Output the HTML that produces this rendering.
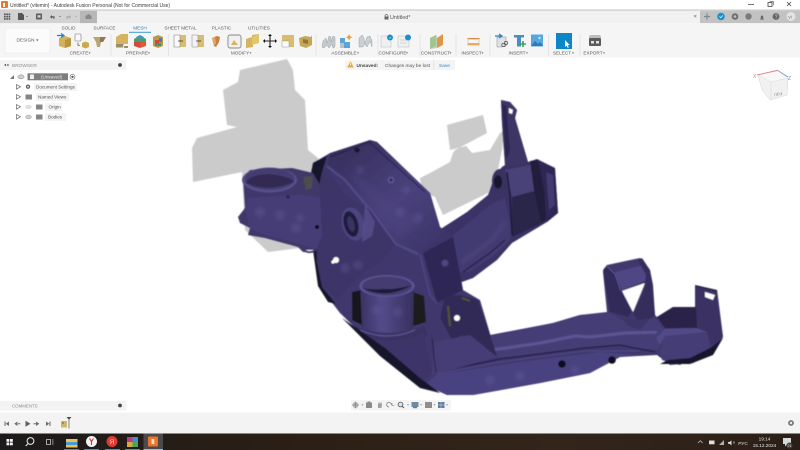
<!DOCTYPE html>
<html><head><meta charset="utf-8"><style>
html,body{margin:0;padding:0;background:#fff;width:800px;height:450px;overflow:hidden}
svg{display:block}
text{font-family:"Liberation Sans","DejaVu Sans",sans-serif}
</style></head><body>
<svg width="800" height="450" viewBox="0 0 800 450" xmlns="http://www.w3.org/2000/svg">
<defs>
<filter id="b1" x="-5%" y="-5%" width="110%" height="110%"><feGaussianBlur stdDeviation="0.6"/></filter>
<filter id="b2" x="-30%" y="-30%" width="160%" height="160%"><feGaussianBlur stdDeviation="1.5"/></filter>
<filter id="b4" x="-30%" y="-30%" width="160%" height="160%"><feGaussianBlur stdDeviation="3"/></filter>
<filter id="b3" x="-5%" y="-5%" width="110%" height="110%"><feGaussianBlur stdDeviation="0.6"/></filter>
<filter id="bt" x="-5%" y="-20%" width="110%" height="140%"><feGaussianBlur stdDeviation="0.35"/></filter>
<linearGradient id="tb" x1="0" x2="1" y1="0" y2="0"><stop offset="0" stop-color="#1c1a1b"/><stop offset=".35" stop-color="#2b1f15"/><stop offset=".7" stop-color="#33251a"/><stop offset="1" stop-color="#2a1f18"/></linearGradient>
<linearGradient id="top" x1="0" x2="1" y1="0" y2="1"><stop offset="0" stop-color="#332c58"/><stop offset=".55" stop-color="#4a427c"/><stop offset="1" stop-color="#3a3265"/></linearGradient>
<linearGradient id="tube" x1="0" x2="1" y1="0" y2="0"><stop offset="0" stop-color="#3a3263"/><stop offset=".4" stop-color="#534b8a"/><stop offset="1" stop-color="#37305e"/></linearGradient>
</defs>
<rect width="800" height="450" fill="#fff"/>

<!-- Shadow -->
<g fill="#cbcbcb" filter="url(#b1)">
<path d="M240 70 L287 59 L293 70 L295 90 L305 100 L308 150 L318 158 L322 175 L300 215 L270 232 L312 244 L300 248 L268 252 L245 230 L242 172 L193 182 L192 148 L197 138 L237 127 L227 125 L223 90 L238 82Z"/>
<path d="M447 125 L483 115 L487 133 L455 150 L453 153 L450 162 L430 173 L420 178 L422 192 L435 197 L443 215 L488 193 L498 170 L502 150 L505 130 L500 133 L490 150 L472 153 L466 146 L450 150Z"/>
</g>

<g filter="url(#b3)">
<!-- Rear right arm -->
<path d="M436 232 L467 212 L488 195 L495 175 L502 167 L505 165 L502 123 L501 100 L510 102 L517 110 L515 118 L528 162 L537 159 L555 168 L558 213 L547 222 L512 243 L497 260 L473 278 L462 282 L450 280Z" fill="#3b3366"/>
<path d="M447 240 L490 205 L505 198 L512 232 L510 240 L495 255 L470 272 L458 272Z" fill="#433b71"/>
<path d="M463 272 L490 253 L505 240" stroke="#2a2449" stroke-width="1.400" fill="none"/>
<path d="M462 262 L492 240 L505 222" stroke="#524a86" stroke-width="3" fill="none" opacity=".6" filter="url(#b2)"/>
<path d="M501 100 L510 102 L517 110 L515 118 L528 162 L515 166 L505 165 L502 123Z" fill="#3c3466"/>
<path d="M502 104 L506 106 L510 150 L506 160Z" fill="#2b2550"/>
<path d="M509 108 L513 110 L512 114 L509 113Z" fill="#fff"/>
<!-- under roller support -->
<path d="M512 187 L537 183 L545 222 L512 237Z" fill="#2b2549"/>
<!-- right end cap -->
<path d="M537 160 L555 168 L558 213 L547 222 L542 205 Z" fill="#2f2852"/>
<path d="M546 172 L553 175 L555 205 L549 210Z" fill="#433b70"/>
<!-- roller -->
<path d="M505 170 L530 165 L540 170 L538 190 L512 197Z" fill="#4a4279"/>
<ellipse cx="500" cy="181" rx="8" ry="12" fill="#38305f"/>
<ellipse cx="498" cy="182" rx="4" ry="6.500" fill="#16122e"/>
<path d="M530 161 L538 160 L544 190 L546 220 L541 222 L534 190Z" fill="#221d3e"/>
<path d="M507 172 L510 195 L512 235" stroke="#1c1834" stroke-width="1.400" fill="none"/>

<!-- Lower arm -->
<path d="M470 345 L490 335 L553 323 L580 315 L607 312 L603 272 L607 265 L640 258 L650 270 L655 315 L657 317 L673 307 L695 307 L695 285 L717 290 L723 337 L713 353 L693 363 L670 365 L657 355 L620 357 L590 373 L540 383 L473 395 L447 395 L420 383 L380 350 L400 330Z" fill="#40386d"/>
<path d="M490 336 L553 323 L580 315 L610 313 L632 326 L655 318 L665 330 L658 350 L620 346 L585 348 L530 355 L495 358Z" fill="#443c75"/>
<path d="M492 350 L540 343 L575 336 L590 337 L625 333 L657 332" stroke="#6d66a6" stroke-width="3" fill="none" opacity=".65" filter="url(#b1)"/>
<path d="M436 372 L500 359 L585 348 L620 345 L655 352" stroke="#241e44" stroke-width="1.200" fill="none"/>
<path d="M432 375 L500 362 L585 351 L640 351" stroke="#6059a0" stroke-width=".7" fill="none" opacity=".7"/>
<path d="M424 386 L450 395 L473 395 L540 383 L590 373 L620 357 L640 355 L600 352 L520 362 L436 375Z" fill="#4a4280"/>
<circle cx="562" cy="364" r="3.800" fill="#0c0a1c"/><circle cx="612" cy="360" r="3.800" fill="#0c0a1c"/>

<!-- Bracket w/ roller right -->
<path d="M622 291 L645 283 L633 312Z" fill="#fff"/>
<path d="M603 270 L607 265 L615 272 L622 291 L632 312 L628 317 L610 312 L605 283Z" fill="#332c59"/>
<path d="M615 272 L645 265 L647 280 L622 290Z" fill="#4f4784"/>
<path d="M607 266 L615 274 L621 291" stroke="#5f5898" stroke-width="1" fill="none"/>
<path d="M638 260 L642 258 L650 270 L653 285 L655 315 L640 325 L633 313 L643 293 L646 275Z" fill="#352e5c"/>
<path d="M622 318 L640 320 L650 318 L640 330 L628 326Z" fill="#3e3669"/>
<!-- right tube -->
<path d="M657 317 L673 307 L697 307 L697 328 L665 328Z" fill="#29234a"/>
<path d="M660 350 L665 335 L707 332 L710 348 L680 365 L662 360Z" fill="#443c75"/>
<path d="M665 329 L697 328 L707 332 L665 336 L660 345 L656 338Z" fill="#524a88"/>
<path d="M695 285 L717 290 L723 337 L712 347 L707 332 L697 328Z" fill="#3a3263"/>
<path d="M705 292 L715 295 L713 300 L705 297Z" fill="#fff"/>
<path d="M696 286 L717 291" stroke="#231e3e" stroke-width="1" fill="none"/>
<path d="M660 364 L690 364 L713 355 L723 338 L712 347 L690 358 L668 360Z" fill="#16122a"/>

<!-- Main body -->
<path d="M313 163 L330 153 L370 140 L377 142 L430 193 L440 227 L453 237 L463 290 L480 300 L497 357 L470 362 L440 372 L420 385 L380 352 L340 313 L320 287 L317 263 L313 240Z" fill="#40386d"/>
<path d="M327 165 L331 153 L370 140 L377 142 L430 193 L440 227 L453 237 L425 252 L397 243 L370 210 L345 180Z" fill="url(#top)"/>
<path d="M345 168 L390 200 L420 222 L400 238 L375 205Z" fill="#4d4581" opacity=".5" filter="url(#b4)"/>
<path d="M330 157 L369 142 L425 192" stroke="#26204a" stroke-width="1" fill="none"/>
<path d="M327 166 L345 180 L372 212 L396 244 L418 254" stroke="#5f5898" stroke-width="2" fill="none" opacity=".7" filter="url(#b1)"/>
<path d="M370 215 L386 246 L378 262 L362 246Z" fill="#5a5290" opacity=".5" filter="url(#b1)"/>
<path d="M316 170 L327 168 L345 195 L370 210 L395 245 L380 262 L365 272 L350 285 L338 300 L322 285 L318 263Z" fill="#3c3468"/>
<path d="M423 253 L453 237 L463 290 L437 303Z" fill="#2d2754"/>
<circle cx="445" cy="263" r="3.500" fill="#4f4785" filter="url(#b1)"/>
<path d="M420 254 L430 295 L437 303" stroke="#4b4380" stroke-width="2" fill="none"/>
<!-- main body black left edge -->
<path d="M313 163 L327 156 L322 172 L318 190 L316 215 L317 262 L322 287 L336 304 L328 302 L318 286 L313 250 L312 210 L310 178Z" fill="#16132b"/>
<!-- bushing -->
<ellipse cx="353" cy="224" rx="11" ry="17" fill="#4d4580" transform="rotate(-15 353 224)"/>
<ellipse cx="351" cy="224" rx="7" ry="13" fill="#1f1a3a" transform="rotate(-15 351 224)"/>
<ellipse cx="351" cy="224" rx="3.500" ry="8" fill="#3a3263" transform="rotate(-15 351 224)"/>
<path d="M365 205 L375 222 L372 236 L362 242Z" fill="#63599a" opacity=".6"/>
<circle cx="357" cy="150" r="2.600" fill="#1b1735"/>
<circle cx="391" cy="180" r="3.500" fill="#5b5394"/>
<circle cx="391" cy="180" r="1.600" fill="#332c58"/>
<circle cx="336" cy="260" r="3" fill="#fff"/>
<circle cx="333" cy="262" r="1.600" fill="#fff"/>

<!-- Left arm -->
<path d="M243 177 L245 208 L238 217 L240 223 L250 228 L248 235 L265 238 L298 247 L303 252 L316 250 L322 235 L320 185 L313 173 L292 168 L250 170Z" fill="#3f3769"/>
<path d="M247 198 L300 195 L320 198 L322 236 L316 250 L304 245 L262 234 L250 228 L246 212Z" fill="#463e76"/>
<path d="M303 250 Q310 254 316 250" stroke="#3a3263" stroke-width="2" fill="#fff"/>
<circle cx="317" cy="227" r="2" fill="#0b0918"/>
<ellipse cx="269.500" cy="180" rx="27.500" ry="12.500" fill="#57508b"/>
<ellipse cx="269.500" cy="179" rx="25" ry="11" fill="#453d72"/>
<path d="M246 183 Q269 193 294 182 Q290 176 269 174 Q248 175 246 183Z" fill="#302952"/>
<path d="M303 177 L313 176 L312 188 L306 190Z" fill="#4e4e4e"/>
<circle cx="288" cy="197" r="1.800" fill="#2c2650"/>

<!-- Center tube -->
<path d="M352 292 L362 290 L362 325 L352 320Z" fill="#14121c"/>
<path d="M413 292 L424 296 L426 322 L413 326Z" fill="#1a1c1a"/>
<path d="M360 285 L414 285 L413 328 Q388 340 362 328Z" fill="url(#tube)"/>
<ellipse cx="387" cy="286" rx="27.500" ry="11" fill="#5b5495"/>
<ellipse cx="387" cy="286" rx="25" ry="9.500" fill="#443c72"/>
<path d="M362 288 Q387 300 412 285 Q395 290 385 289 Q370 290 362 288Z" fill="#1f1a38"/>
<path d="M355 326 Q388 340 424 326 L428 335 Q390 348 365 338Z" fill="#3a3263"/>
<path d="M364 338 Q395 345 424 333 L432 372 L420 384 L390 360Z" fill="#3e3669"/>
<path d="M360 330 Q388 342 415 330" stroke="#5f5898" stroke-width="1.200" fill="none"/>
<!-- Right bracket near tube -->
<path d="M445 296 L460 295 L478 300 L497 356 L470 352 L462 335 L452 340 L440 318Z" fill="#322b57"/>
<circle cx="457" cy="318" r="3" fill="#fff"/>
<path d="M448 306 L450 326" stroke="#55552f" stroke-width="2" fill="none"/>
<path d="M462 298 L470 301" stroke="#55552f" stroke-width="2" fill="none"/>
<path d="M435 342 L470 335 L497 357 L440 373 L432 374Z" fill="#463e76"/>
<path d="M432 338 L436 373" stroke="#26204a" stroke-width="1" fill="none"/>
<!-- lower-left dark edge -->
<path d="M342 318 L380 356 L420 388 L440 393 L420 378 L385 348Z" fill="#16132b"/>
</g>
<!-- surface blotches -->
<g fill="#6a64a6" opacity=".28" filter="url(#b2)">
<circle cx="260" cy="212" r="5"/><circle cx="280" cy="215" r="5"/><circle cx="300" cy="218" r="4"/><circle cx="296" cy="228" r="5"/>
<circle cx="345" cy="268" r="5"/><circle cx="358" cy="265" r="5"/><circle cx="400" cy="212" r="5"/><circle cx="418" cy="218" r="5"/>
<circle cx="376" cy="310" r="5"/><circle cx="398" cy="312" r="5"/><circle cx="520" cy="376" r="5"/><circle cx="490" cy="380" r="5"/><circle cx="575" cy="370" r="4"/>
<circle cx="360" cy="170" r="4"/><circle cx="406" cy="190" r="4"/>
</g>

<!-- Title bar -->
<rect x="0" y="0" width="800" height="10" fill="#fff"/>
<rect x="1" y="1" width="7" height="7" rx="1" fill="#e8792a"/>
<rect x="3" y="3" width="2" height="4" fill="#fff"/>
<text x="10" y="7.200" font-size="5" fill="#3c3c3c" filter="url(#bt)">Untitled* (vitemin) - Autodesk Fusion Personal (Not for Commercial Use)</text>
<path d="M748 4.500h6" stroke="#555" stroke-width=".8"/>
<rect x="768" y="2.500" width="4" height="4" fill="none" stroke="#444" stroke-width=".8"/><path d="M770 2v-.3h3.500v3.500" fill="none" stroke="#444" stroke-width=".6"/>
<path d="M787 2l4 4M791 2l-4 4" stroke="#444" stroke-width=".8"/>
<rect y="9.500" width="800" height="1.200" fill="#c4c4c4"/>

<!-- Tab row -->
<rect y="10.700" width="800" height="12.500" fill="#f1f1f1"/>
<rect y="10.700" width="97" height="12.500" fill="#d2d2d2"/>
<rect x="80" y="11" width="17" height="12.200" fill="#b7b7b7"/>
<path d="M85.500 19v-3l3-2 3 2v3z" fill="#888"/>
<g fill="#4d4d4d"><rect x="4" y="13.500" width="1.600" height="1.600"/><rect x="6.300" y="13.500" width="1.600" height="1.600"/><rect x="8.600" y="13.500" width="1.600" height="1.600"/><rect x="4" y="15.800" width="1.600" height="1.600"/><rect x="6.300" y="15.800" width="1.600" height="1.600"/><rect x="8.600" y="15.800" width="1.600" height="1.600"/><rect x="4" y="18.100" width="1.600" height="1.600"/><rect x="6.300" y="18.100" width="1.600" height="1.600"/><rect x="8.600" y="18.100" width="1.600" height="1.600"/></g>
<path d="M18 13h4l2 2v5h-6z" fill="#555"/><path d="M26 16l1 1 1-1z" fill="#555"/>
<rect x="36" y="13.500" width="6" height="6" rx=".6" fill="#5d5d5d"/><rect x="37.500" y="15.200" width="3" height="2.400" fill="#d2d2d2"/>
<path d="M50 17l2-2v1.300h2.500v2.500h-1.200v-1.300h-1.300v1.300z" fill="#555"/><path d="M59 16l1 1 1-1z" fill="#555"/>
<path d="M71 17l-2-2v1.300h-2.500v2.500h1.200v-1.300h1.300v1.300z" fill="#a8a8a8"/><path d="M75 16l1 1 1-1z" fill="#a0a0a0"/>
<!-- doc tab -->
<path d="M385 19v-3a1.500 1.500 0 0 1 3 0v3" fill="none" stroke="#666" stroke-width=".7"/><rect x="384.500" y="16.500" width="4" height="3" fill="#666"/>
<text x="390" y="19" font-size="5.400" fill="#555" filter="url(#bt)">Untitled*</text>
<path d="M694 15l2.400 2.400M696.400 15l-2.400 2.400" stroke="#888" stroke-width=".6"/>
<!-- right quick icons -->
<rect x="700" y="10.700" width="100" height="12.500" fill="#c2c2c2"/>
<path d="M707 13.500v6M704 16.500h6" stroke="#7e8a8e" stroke-width="1.300"/>
<circle cx="721" cy="16.500" r="3.800" fill="#1d8fcf"/><path d="M719.500 16.500l1.200 1.200 2-2.200" stroke="#fff" stroke-width=".7" fill="none"/>
<circle cx="735" cy="16.500" r="3.300" fill="#6f6f6f"/><circle cx="735" cy="16.500" r="1.300" fill="#c2c2c2"/>
<circle cx="748.500" cy="16.500" r="3.200" fill="#7a7a7a"/>
<path d="M760 19.500h4l-.8-1.200v-2a1.300 1.300 0 0 0-2.400 0v2z" fill="#666"/>
<circle cx="776" cy="16.500" r="3.400" fill="#666"/><text x="774.800" y="18.500" font-size="5" fill="#ddd">?</text>
<circle cx="791" cy="16.500" r="4.500" fill="#e3e3e3"/><text x="788.200" y="18.500" font-size="4.800" fill="#777">vi</text>

<!-- Ribbon -->
<rect y="23.200" width="800" height="34.300" fill="#f5f5f5"/>
<rect x="5" y="28" width="45" height="25" rx="2" fill="#fbfbfb" stroke="#e6e6e6" stroke-width=".5"/>
<g font-size="4.700" fill="#5a5a5a" text-anchor="middle" filter="url(#bt)">
<text x="25.500" y="41.500">DESIGN</text>
<text x="68.500" y="29.300">SOLID</text>
<text x="104.500" y="29.300">SURFACE</text>
<text x="140" y="29.300" fill="#2a7fb5">MESH</text>
<text x="180.500" y="29.300">SHEET METAL</text>
<text x="221.500" y="29.300">PLASTIC</text>
<text x="259" y="29.300">UTILITIES</text>
<text x="79" y="54.500">CREATE</text>
<text x="137" y="54.500">PREPARE</text>
<text x="240" y="54.500">MODIFY</text>
<text x="344" y="54.500">ASSEMBLE</text>
<text x="392.500" y="54.500">CONFIGURE</text>
<text x="435.500" y="54.500">CONSTRUCT</text>
<text x="471.500" y="54.500">INSPECT</text>
<text x="517" y="54.500">INSERT</text>
<text x="562" y="54.500">SELECT</text>
<text x="593" y="54.500">EXPORT</text>
</g>
<g fill="#444"><path d="M36 39.500l1.300 1.500 1.300-1.500z"/><path d="M88.500 52.500l1 1.200 1-1.200z"/><path d="M148 52.500l1 1.200 1-1.200z"/><path d="M249.500 52.500l1 1.200 1-1.200z"/><path d="M357 52.500l1 1.200 1-1.200z"/><path d="M406 52.500l1 1.200 1-1.200z"/><path d="M449.500 52.500l1 1.200 1-1.200z"/><path d="M481.500 52.500l1 1.200 1-1.200z"/><path d="M526 52.500l1 1.200 1-1.200z"/><path d="M572 52.500l1 1.200 1-1.200z"/><path d="M603 52.500l1 1.200 1-1.200z"/></g>
<rect x="129" y="31.800" width="22" height="1" fill="#3d9bcc"/>
<g stroke="#dfdfdf" stroke-width=".7"><path d="M111 34v22M168.500 34v22M316 34v22M378 34v22M420 34v22M456 34v22M490 34v22M548.500 34v22M580 34v22"/></g>

<!-- ribbon icons -->
<g filter="url(#bt)">
<!-- create -->
<path d="M59 38l6-2 6 2v8l-6 2-6-2z" fill="#d4b25c"/><path d="M65 40v8l6-2v-8z" fill="#b8953f"/><path d="M57 35.500h7M61 33.500l3 2-3 2" stroke="#2b7fc0" stroke-width="1.200" fill="none"/>
<rect x="75" y="34" width="6" height="7" rx=".8" fill="#fafafa" stroke="#777" stroke-width=".6"/><path d="M78 42.500v3h2" stroke="#333" stroke-width=".6" fill="none"/><path d="M82 43l3.500-1.500 3.500 1.500v4l-3.500 1.500-3.500-1.500z" fill="#c8a951"/>
<path d="M93 37h13l-3 5h-2l-1 5h-3l-1-5z" fill="#b9a476"/><path d="M100 37h6l-3 5h-3z" fill="#8e7a4f"/>
<!-- prepare -->
<path d="M116 37l5-3h7v10h-4l-1 3h-7z" fill="#d6b45f"/><rect x="116" y="44" width="7" height="3.500" fill="#9c8d6b"/><rect x="124" y="46" width="4" height="2" fill="#9c8d6b"/>
<path d="M134 39l6-3.500 6 3.500v3h-12z" fill="#3fa26f"/><path d="M134 42h6v6l-6-2z" fill="#d2483c"/><path d="M140 42h6v4l-6 2z" fill="#e0593a"/><path d="M136 37l4-2 4 2-4 2z" fill="#4a90d0"/>
<path d="M153 37l5-2 5 2v9l-5 2-5-2z" fill="#b89a4a"/><rect x="155" y="40" width="4" height="3" fill="#d04a3a"/><rect x="159" y="38" width="3" height="4" fill="#3f7fc8"/><rect x="155" y="43" width="6" height="3" fill="#4a8f7a"/>
<!-- modify -->
<rect x="174" y="35" width="12" height="12" fill="#d8bd6e"/><rect x="174" y="35" width="6" height="12" fill="#fafafa" stroke="#777" stroke-width=".5"/><path d="M178 41h5" stroke="#222" stroke-width=".7"/>
<rect x="192" y="35" width="12" height="12" fill="#d8bd6e"/><rect x="192" y="35" width="6" height="12" fill="#f2f2f2" stroke="#888" stroke-width=".5"/><path d="M196 41h5" stroke="#222" stroke-width=".7"/>
<path d="M212 38l5-2 3 1-1 5-3 5-2-1z" fill="#c9803d"/><path d="M212 38l3-1 1 6-2 3z" fill="#e0a968"/>
<rect x="228" y="35" width="13" height="13" rx="2" fill="#f0f0f0" stroke="#666" stroke-width=".7"/><path d="M231 45l3-5 4 5z" fill="#d6b45f"/>
<path d="M246 39l6-2v-2l7-1v9l-6 1v3l-7 1z" fill="#d4b45c"/><path d="M252 37l7-3v9l-7 2z" fill="#e1c670"/>
<path d="M270 35v12M264 41h12" stroke="#222" stroke-width="1.100"/><path d="M270 34l-2 2h4zM270 48l-2-2h4zM263 41l2-2v4zM277 41l-2-2v4z" fill="#111"/>
<rect x="282" y="35" width="12" height="12" fill="#d8bd6e"/><rect x="282" y="41" width="7" height="6" fill="#fafafa" stroke="#888" stroke-width=".4"/>
<path d="M299 38l6-2 6 1 1-2 0 10-6 3-6-2z" fill="#c6a758"/><path d="M303 39l5 1v4l-5-1z" fill="#8f7739"/>
<!-- assemble -->
<path d="M322 47l1-6 3-3 1 5 2-7 2 1 0 5 2-6 2 1v9l-1 2h-1l-1-4-3 4-2-3-3 3z" fill="#c3c9cc" stroke="#8d979c" stroke-width=".4"/>
<path d="M340 38h5v4h5v6h-10z" fill="#5aa4d8"/><path d="M340 43h4v5h-4z" fill="#b8c2c8"/><path d="M349 34l1.200 2.300 2.300 1-2.300 1-1.200 2.300-1-2.300-2.300-1 2.300-1z" fill="#e8a13b"/>
<path d="M359 47v-9l3-3 2 3 1 6 2-7 3-1 2 5v6l-2-6-3 6-2-3-2 3z" fill="#c9cfd2" stroke="#8d979c" stroke-width=".4"/>
<!-- configure -->
<rect x="381" y="36" width="10" height="11" fill="#eef0f2" stroke="#aaa" stroke-width=".4"/><circle cx="390" cy="37.500" r="3" fill="#1d8fcf"/><path d="M388.800 37.500l1 1 1.500-1.600" stroke="#fff" stroke-width=".5" fill="none"/>
<rect x="398" y="36" width="11" height="11" fill="#eef0f2" stroke="#aaa" stroke-width=".4"/><circle cx="408" cy="37.500" r="3" fill="#1d8fcf"/><path d="M400 40h7M400 43h7" stroke="#b5b5b5" stroke-width=".6"/>
<!-- construct -->
<path d="M430 38l6-3v11l-6 3z" fill="#9bc18b"/><path d="M437 38l6-4v11l-6 3z" fill="#e0954b"/><path d="M430 38l6-3 1 1v12l-7 1z" fill="#a5c695" opacity=".7"/>
<!-- inspect -->
<rect x="467.500" y="38" width="12" height="1.300" fill="#d88e3c"/><rect x="467.500" y="43" width="12" height="2.400" fill="#e7ad5c"/><path d="M468 39.300v4M479 39.300v4" stroke="#bbb" stroke-width=".6"/>
<!-- insert -->
<path d="M497 37h9v9l-4 1h-5z" fill="#dfe2e4" stroke="#8a8a8a" stroke-width=".5"/><path d="M495 36h6M499 34l3 2-3 2" stroke="#2b7fc0" stroke-width="1.200" fill="none"/><circle cx="503.500" cy="45" r="1.700" fill="none" stroke="#444" stroke-width=".7"/><circle cx="506" cy="43" r="1.700" fill="none" stroke="#444" stroke-width=".7"/>
<path d="M514 35h10v2.500h-3v9h-4v-9h-3z" fill="#4a8ec2"/><path d="M523 41v6M520 44h6" stroke="#3da35c" stroke-width="1.600"/>
<rect x="531" y="34.500" width="12" height="12" fill="#55a7dd"/><path d="M531 46l4-5 3 3 2-2 3 4z" fill="#2d7ab8"/><circle cx="539.500" cy="38" r="1.200" fill="#cde6f5"/>
<!-- select -->
<rect x="556" y="33" width="16" height="16" fill="#0f86c9"/><path d="M565 40v7l1.600-1.400 1.200 2.400 1-.5-1.200-2.400h2.200z" fill="#fff"/>
<!-- export -->
<path d="M589 37a2 2 0 0 1 2-2h8a2 2 0 0 1 2 2v1h-12z" fill="#bdbdbd"/><rect x="589" y="38" width="12" height="8" rx="1" fill="#5a5a5a"/><rect x="591" y="41" width="3" height="2.500" fill="#e0e0e0"/><rect x="596" y="41" width="3" height="2.500" fill="#e0e0e0"/>
</g>

<!-- Browser panel -->
<rect x="0" y="60" width="126.500" height="10" fill="#f4f4f4"/>
<path d="M4 65l2-1.300v2.600zM6.500 65l2-1.300v2.600z" fill="#555"/>
<text x="12" y="67" font-size="4.800" fill="#8d8d8d" filter="url(#bt)">BROWSER</text>
<circle cx="120" cy="65" r="1.900" fill="#444"/>
<!-- tree -->
<path d="M10 79h4v-4z" fill="#777"/>
<ellipse cx="21" cy="76.800" rx="3.200" ry="2" fill="#cfcfcf" stroke="#888" stroke-width=".5"/>
<rect x="27.500" y="73.300" width="40.500" height="7" fill="#7e7e7e"/>
<rect x="30" y="74.500" width="4" height="4.600" fill="#eee"/>
<text x="41" y="78.500" font-size="4.600" fill="#e9e9e9" filter="url(#bt)">(Unsaved)</text>
<circle cx="72.500" cy="76.800" r="2.500" fill="#fff" stroke="#666" stroke-width=".6"/><circle cx="72.500" cy="76.800" r="1.100" fill="#444"/>
<g fill="#fff" stroke="#666" stroke-width=".7">
<path d="M16.500 84.500l4 2.300-4 2.300z"/><path d="M16.500 94.500l4 2.300-4 2.300z"/><path d="M16.500 104.500l4 2.300-4 2.300z"/><path d="M16.500 114.500l4 2.300-4 2.300z"/>
</g>
<circle cx="28" cy="86.700" r="2.200" fill="#666"/><circle cx="28" cy="86.700" r=".9" fill="#ddd"/>
<g fill="#858585"><rect x="25.500" y="94.500" width="6.500" height="5"/><rect x="36" y="104.500" width="6.500" height="5"/><rect x="36" y="114.500" width="6.500" height="5"/></g>
<ellipse cx="28.500" cy="107" rx="3" ry="1.800" fill="#e2e2e2" stroke="#d0d0d0" stroke-width=".5"/>
<ellipse cx="28.500" cy="117" rx="3" ry="1.800" fill="#cfcfcf" stroke="#999" stroke-width=".5"/>
<rect x="34" y="83" width="43" height="8" fill="#f4f4f4"/><rect x="36" y="93" width="33" height="8" fill="#f4f4f4"/><rect x="45" y="103" width="17" height="8" fill="#f4f4f4"/><rect x="45" y="113" width="21" height="8" fill="#f4f4f4"/>
<g font-size="4.600" fill="#555" filter="url(#bt)">
<text x="36" y="88.500">Document Settings</text><text x="38" y="98.500">Named Views</text><text x="48.500" y="108.500">Origin</text><text x="48" y="118.500">Bodies</text>
</g>

<!-- Save notice -->
<rect x="345" y="60" width="110" height="10" fill="#f4f4f4"/>
<path d="M350.500 61.300l3.300 6.200h-6.600z" fill="#eea53c"/><rect x="350.100" y="63.300" width=".8" height="2.200" fill="#fff"/>
<text x="356.500" y="66.800" font-size="4.800" font-weight="bold" fill="#444" filter="url(#bt)">Unsaved:</text>
<text x="385" y="66.800" font-size="4.800" fill="#555" filter="url(#bt)">Changes may be lost</text>
<rect x="433.500" y="60" width=".6" height="10" fill="#dcdcdc"/>
<text x="439" y="66.800" font-size="4.800" fill="#3a86bd" filter="url(#bt)">Save</text>

<!-- ViewCube -->
<g filter="url(#bt)">
<path d="M758 75l19-5 11 8-1 17-17 5-8-10z" fill="#f1f1f1" stroke="#d4d4d4" stroke-width=".5"/>
<path d="M758 75l19-5 11 8-17 4z" fill="#f8f8f8" stroke="#d9d9d9" stroke-width=".5"/>
<path d="M771 82l0 18" stroke="#d4d4d4" stroke-width=".5"/>
<path d="M757 75l20-4.500" stroke="#dd8585" stroke-width=".9"/><path d="M777 70l11 7" stroke="#8a9bd6" stroke-width=".9"/>
<text x="753" y="78" font-size="5" fill="#d77">X</text><text x="788" y="80" font-size="5" fill="#6f87cc">Z</text>
<text x="0" y="0" font-size="4.400" fill="#8f8f8f" transform="translate(782 92) rotate(170)">FdU</text>
</g>

<!-- Comments -->
<rect x="0" y="401" width="126.500" height="9.500" fill="#f3f3f3"/>
<text x="12" y="407.500" font-size="4.400" fill="#8d8d8d" filter="url(#bt)">COMMENTS</text>
<circle cx="120" cy="405.500" r="1.900" fill="#444"/>

<!-- Nav bar -->
<rect x="351" y="400" width="100" height="10.500" fill="#f4f4f4"/>
<g filter="url(#bt)">
<circle cx="355.500" cy="405" r="3" fill="#b5b5b5"/><path d="M355.500 401.500v7M352 405h7" stroke="#787878" stroke-width=".6"/>
<path d="M361.500 404.500l1 1 1-1z" fill="#555"/>
<rect x="366" y="402.500" width="6" height="5.500" fill="#8b8b8b"/><rect x="367.500" y="401.500" width="3" height="1.200" fill="#8b8b8b"/>
<path d="M378 408v-4l1-2 .5 2 .5-2.500.7 2.500.7-2 .6 3-.6 3z" fill="#a0a0a0"/>
<path d="M389 407a2.300 2.300 0 1 1 2.300-2.300" fill="none" stroke="#777" stroke-width=".8"/><path d="M392 403v2.500h2.500" fill="none" stroke="#777" stroke-width=".6"/>
<circle cx="400.500" cy="404.500" r="2.400" fill="#d4e4ee" stroke="#555" stroke-width=".8"/><path d="M402 406l2 2" stroke="#555" stroke-width="1"/>
<path d="M407 404.500l1 1 1-1z" fill="#555"/>
<rect x="411.500" y="402" width="7" height="5" fill="#6c8aa2"/><rect x="413" y="407" width="4" height="1.200" fill="#777"/><path d="M420 404.500l1 1 1-1z" fill="#555"/>
<rect x="425" y="402" width="7" height="6" fill="#8e8e8e"/><path d="M433.500 404.500l1 1 1-1z" fill="#555"/>
<rect x="438" y="402" width="6.500" height="6" fill="#5e7ca6"/><path d="M438 405h6.500M441 402v6" stroke="#c8d4e2" stroke-width=".5"/><path d="M446 404.500l1 1 1-1z" fill="#555"/>
</g>

<!-- Timeline -->
<rect x="0" y="412.500" width="800" height="21" fill="#f3f3f3"/>
<g fill="#6a6a6a" filter="url(#bt)">
<rect x="4.500" y="421.500" width="1" height="4.500"/><path d="M9 421.500v4.500l-3.300-2.200z"/>
<path d="M17.500 421.500v4.500l-3.300-2.200zM18 423.300h2.400v1h-2.400z"/>
<path d="M25.500 420.800v6l5-3z" fill="#5f5f5f"/>
<path d="M36 421.500v4.500l3.300-2.200zM33.500 423.300h2.400v1h-2.400z"/>
<path d="M46 421.500v4.500l3.300-2.200z"/><rect x="49.500" y="421.500" width="1" height="4.500"/>
</g>
<rect x="61" y="421" width="6" height="6.500" fill="#cdb768"/><rect x="62" y="422" width="2" height="2" fill="#a48a3e"/>
<rect x="68.500" y="418" width=".9" height="10.500" fill="#7a7a7a"/><path d="M66.500 417h5l-2.500 2.800z" fill="#4a4a4a"/>
<circle cx="791" cy="423" r="2.900" fill="#777"/><circle cx="791" cy="423" r="1.200" fill="#ececec"/>

<!-- Taskbar -->
<rect y="433.500" width="800" height="16.500" fill="url(#tb)"/>
<g filter="url(#bt)">
<g fill="#f4f4f4"><rect x="6.500" y="439" width="2.800" height="2.800"/><rect x="10" y="439" width="2.800" height="2.800"/><rect x="6.500" y="442.500" width="2.800" height="2.800"/><rect x="10" y="442.500" width="2.800" height="2.800"/></g>
<circle cx="30.500" cy="441" r="3.400" fill="none" stroke="#f0f0f0" stroke-width="1"/><path d="M28 443.700l-2.300 2.300" stroke="#f0f0f0" stroke-width="1"/>
<rect x="46.500" y="439.500" width="4" height="5" fill="none" stroke="#ddd" stroke-width=".7"/><path d="M52 440h1.500M52 442h1.500M52 444h1.500" stroke="#ddd" stroke-width=".7"/>
<rect x="66" y="439" width="11.500" height="8.500" fill="#e9c25a"/><rect x="66" y="442" width="11.500" height="3" fill="#4a9dd1"/>
<rect x="64" y="449" width="15" height=".8" fill="#6aa8d0"/>
<circle cx="91.500" cy="441.500" r="5.500" fill="#f4f4f4"/><path d="M89.500 438.500l2 3 2-3M91.500 441.500v3.500" stroke="#d22b2b" stroke-width="1.100" fill="none"/>
<rect x="84" y="449" width="15" height=".8" fill="#6aa8d0"/>
<circle cx="112" cy="441.500" r="5.500" fill="#de3b30"/><text x="112" y="444" font-size="6.500" fill="#f6d4d0" text-anchor="middle">Я</text>
<rect x="105" y="449" width="15" height=".8" fill="#6aa8d0"/>
<rect x="127" y="437" width="5.500" height="5" fill="#c03a7a"/><rect x="132.500" y="437" width="5.500" height="5" fill="#3f8fcf"/><rect x="127" y="442" width="5.500" height="5" fill="#d8a83a"/><rect x="132.500" y="442" width="5.500" height="5" fill="#4da35a"/>
<rect x="125" y="449" width="15" height=".8" fill="#6aa8d0"/>
<rect x="143.500" y="433.500" width="19.500" height="16.500" fill="#4c4a4a"/>
<rect x="148" y="436.500" width="10" height="10" rx="1" fill="#e8742a"/><rect x="151.500" y="439" width="2.800" height="5" fill="#ffe2c8"/>
<rect x="143.500" y="449" width="19.500" height="1" fill="#8ec3e0"/>
<path d="M698 443l2.300-2.300 2.300 2.300" fill="none" stroke="#ddd" stroke-width=".6"/>
<rect x="709" y="440.500" width="5.500" height="3.800" fill="#e0e0e0"/>
<path d="M719 445l5-5v5z" fill="#b0b0b0"/>
<path d="M728 442h1.500l2-1.600v5l-2-1.600h-1.500z" fill="#dcdcdc"/><path d="M733 441.500l2 2M735 441.500l-2 2" stroke="#ccc" stroke-width=".5"/>
<text x="743" y="444.800" font-size="4.800" fill="#e0e0e0" text-anchor="middle">РУС</text>
<text x="764.500" y="440.500" font-size="4.700" fill="#e6e6e6" text-anchor="middle">19:14</text>
<text x="764.500" y="447" font-size="4.700" fill="#e6e6e6" text-anchor="middle">15.12.2024</text>
<rect x="783" y="438" width="8" height="6" fill="#d8d8d8"/><path d="M785 444v2.500l2.500-2.500z" fill="#d8d8d8"/>
<circle cx="789.500" cy="445.500" r="3" fill="#3f3f3f"/><text x="789.500" y="447" font-size="3.800" fill="#ddd" text-anchor="middle">21</text>
</g>
</svg>
</body></html>
